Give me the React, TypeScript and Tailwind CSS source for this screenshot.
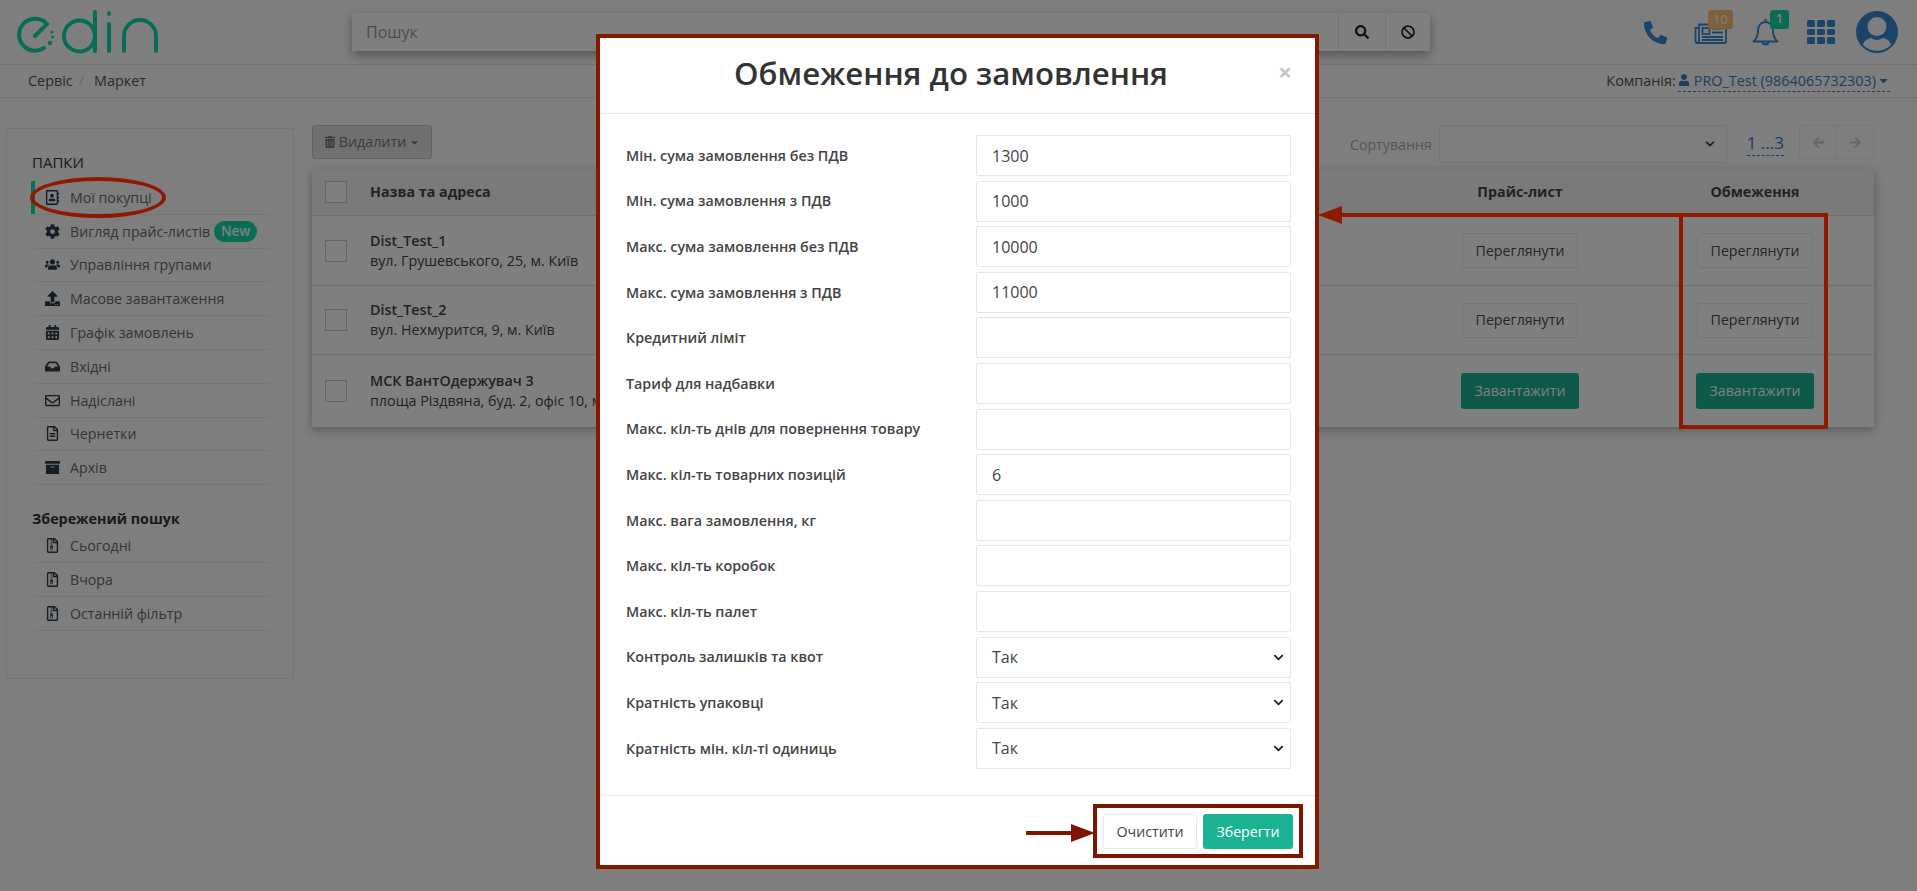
import type { ReactNode } from "react";
import {
  FaArchive,
  FaArrowLeft,
  FaArrowRight,
  FaBan,
  FaCalendarAlt,
  FaCaretDown,
  FaChevronDown,
  FaCog,
  FaInbox,
  FaPhoneAlt,
  FaRegAddressBook,
  FaRegEnvelope,
  FaRegFileAlt,
  FaRegFileArchive,
  FaSearch,
  FaTrashAlt,
  FaUpload,
  FaUser,
  FaUsers,
} from "react-icons/fa";

const FONT = "font-['Open_Sans','Noto_Sans',sans-serif]";

const FOLDERS = [
  { label: "Мої покупці", icon: <FaRegAddressBook /> },
  { label: "Вигляд прайс-листів", icon: <FaCog />, badge: "New" },
  { label: "Управління групами", icon: <FaUsers /> },
  { label: "Масове завантаження", icon: <FaUpload /> },
  { label: "Графік замовлень", icon: <FaCalendarAlt /> },
  { label: "Вхідні", icon: <FaInbox /> },
  { label: "Надіслані", icon: <FaRegEnvelope /> },
  { label: "Чернетки", icon: <FaRegFileAlt /> },
  { label: "Архів", icon: <FaArchive /> },
];

const SAVED = ["Сьогодні", "Вчора", "Останній фільтр"];

const ROWS = [
  { name: "Dist_Test_1", address: "вул. Грушевського, 25, м. Київ", action: "view", h: "h-[70px]" },
  { name: "Dist_Test_2", address: "вул. Нехмурится, 9, м. Київ", action: "view", h: "h-[69px]" },
  { name: "МСК ВантОдержувач 3", address: "площа Різдвяна, буд. 2, офіс 10, м. Київ", action: "load", h: "h-[72px]" },
];

const FIELDS: { label: string; value: string; select?: boolean }[] = [
  { label: "Мін. сума замовлення без ПДВ", value: "1300" },
  { label: "Мін. сума замовлення з ПДВ", value: "1000" },
  { label: "Макс. сума замовлення без ПДВ", value: "10000" },
  { label: "Макс. сума замовлення з ПДВ", value: "11000" },
  { label: "Кредитний ліміт", value: "" },
  { label: "Тариф для надбавки", value: "" },
  { label: "Макс. кіл-ть днів для повернення товару", value: "" },
  { label: "Макс. кіл-ть товарних позицій", value: "6" },
  { label: "Макс. вага замовлення, кг", value: "" },
  { label: "Макс. кіл-ть коробок", value: "" },
  { label: "Макс. кіл-ть палет", value: "" },
  { label: "Контроль залишків та квот", value: "Так", select: true },
  { label: "Кратність упаковці", value: "Так", select: true },
  { label: "Кратність мін. кіл-ті одиниць", value: "Так", select: true },
];

function Logo() {
  return (
    <svg width="160" height="64" viewBox="0 0 160 64" fill="none" stroke="#12d8aa" strokeWidth="4" strokeLinecap="round">
      <path d="M35 36 L47 24 A16 16 0 1 0 44 48" />
      <circle cx="52" cy="32" r="1.6" fill="#12d8aa" stroke="none" />
      <circle cx="52.5" cy="37" r="1.6" fill="#12d8aa" stroke="none" />
      <circle cx="50" cy="43" r="2.2" fill="#12d8aa" stroke="none" />
      <circle cx="79.5" cy="36" r="15.5" />
      <path d="M95 12 V51" />
      <path d="M109 13 V14 M109 24 V51" />
      <path d="M124 51 V36 A16 16 0 0 1 156 36 V51" />
    </svg>
  );
}

function Avatar() {
  return (
    <svg width="42" height="42" viewBox="0 0 42 42">
      <circle cx="21" cy="21" r="21" fill="#3688d0" />
      <circle cx="21" cy="15.5" r="9.5" fill="#fdfdfd" />
      <path d="M7 34 C8 29 13 27.5 15.5 27 C18 29.5 24 29.5 26.5 27 C29 27.5 34 29 35 34 C31 38 26 39.8 21 39.8 C16 39.8 11 38 7 34 Z" fill="#fdfdfd" />
    </svg>
  );
}

function Newspaper() {
  return (
    <svg width="33" height="21" viewBox="0 0 33 21" fill="none" stroke="#3688d0" strokeWidth="1.8">
      <path d="M5 5 H1.5 V18 Q1.5 20 3.5 20 H30 Q32 20 32 18 V1.5 H5 V18 Q5 20 3.5 20" />
      <rect x="8.5" y="5" width="7" height="6" />
      <path d="M18 5.5 H29 M18 9.5 H29 M8 14 H29 M8 17 H29" />
    </svg>
  );
}

function Bell() {
  return (
    <svg width="27" height="29" viewBox="0 0 27 29" fill="none" stroke="#3688d0" strokeWidth="1.9" strokeLinejoin="round">
      <path d="M13.5 1 V4" />
      <path d="M1.5 23.5 C4.5 21 6 17 6 12.5 C6 7.5 9 4 13.5 4 C18 4 21 7.5 21 12.5 C21 17 22.5 21 25.5 23.5 Z" />
      <path d="M10.5 23.5 A3 3 0 0 0 16.5 23.5" />
    </svg>
  );
}

function AppsGrid() {
  return (
    <div className="grid w-[28px] grid-cols-3 gap-[2px]">
      {Array.from({ length: 9 }).map((_, i) => (
        <span key={i} className="h-[6.5px] rounded-[1.5px] bg-[#3688d0]" />
      ))}
    </div>
  );
}

function Checkbox() {
  return <span className="block h-[22px] w-[22px] border border-[#c9c9c9] bg-white" />;
}

function NavItem({ icon, children, active }: { icon: ReactNode; children: ReactNode; active?: boolean }) {
  return (
    <div className="relative flex h-[33.8px] items-center border-b border-[#e7eaec] pl-[10px] text-[14.2px] text-[#676a6c]">
      {active && <span className="absolute bottom-0 left-[-4px] top-0 w-[4px] bg-[#12d8aa]" />}
      <span className="flex w-[25px] justify-start text-[15px] text-[#2b3a4a]">{icon}</span>
      {children}
    </div>
  );
}

function ViewButton() {
  return (
    <button className="h-[35px] w-[116px] rounded-[3px] border border-[#e7eaec] bg-white text-[14.2px] text-[#4a4a4a]">
      Переглянути
    </button>
  );
}

function LoadButton() {
  return (
    <button className="h-[36px] w-[118px] rounded-[3px] bg-[#1ab394] text-[14.2px] text-white">
      Завантажити
    </button>
  );
}

function Page() {
  return (
    <div className="h-[891px] overflow-hidden bg-[#fdfdfd]">
      <header className="flex h-[65px] items-center border-b border-[#e4e4e4] pr-[19px]">
        <Logo />
        <div className="ml-[192px] flex h-[38px] w-[1078px] items-stretch bg-white shadow-[0_4px_10px_rgba(0,0,0,0.35)]">
          <div className="flex flex-1 items-center pl-[14px] text-[16px] text-[#999]">Пошук</div>
          <span className="flex w-[47px] items-center justify-center border-l border-[#e7e7e7] text-[14px] text-[#222]"><FaSearch /></span>
          <span className="flex w-[45px] items-center justify-center border-l border-[#e7e7e7] text-[14px] text-[#222]"><FaBan /></span>
        </div>
        <div className="ml-auto flex items-center">
          <FaPhoneAlt className="text-[23px] text-[#3688d0]" />
          <div className="relative ml-[27px] mt-[3px]">
            <Newspaper />
            <span className="absolute left-[14px] top-[-13px] flex h-[19px] w-[25px] items-center justify-center rounded-[3px] bg-[#ffc070] text-[13px] text-white">10</span>
          </div>
          <div className="relative ml-[25px]">
            <Bell />
            <span className="absolute left-[18px] top-[-8px] flex h-[19px] w-[19px] items-center justify-center rounded-[3px] bg-[#12d8aa] text-[13px] font-semibold text-white">1</span>
          </div>
          <div className="ml-[28px]"><AppsGrid /></div>
          <div className="ml-[21px]"><Avatar /></div>
        </div>
      </header>

      <div className="flex h-[33px] items-center justify-between border-b border-[#e4e4e4] pl-[28px] pr-[27px] text-[14.4px] text-[#555]">
        <div className="flex items-center">
          <span>Сервіс</span>
          <span className="ml-[6px] mr-[10px] text-[#ccc]">/</span>
          <span>Маркет</span>
        </div>
        <div className="flex items-center">
          <span>Компанія:</span>
          <span className="ml-[2px] flex items-center gap-[4px] border-b border-dashed border-[#3a7ec0] text-[#3a7ec0]">
            <FaUser className="text-[12px]" />
            PRO_Test (9864065732303)
            <FaCaretDown className="ml-[-3px] text-[13px]" />
          </span>
        </div>
      </div>

      <div className="flex items-start pl-[6px] pr-[43px] pt-[28px]">
        <aside className="mt-[2px] h-[551px] w-[288px] shrink-0 border border-[#e7eaec] pl-[25px] pr-[24px] pt-[23px]">
          <div className="text-[15px] font-medium leading-[20px] text-[#333]">ПАПКИ</div>
          <div className="ml-[3px] mt-[9px]">
            {FOLDERS.map((f, i) => (
              <NavItem key={f.label} icon={f.icon} active={i === 0}>
                {f.label}
                {f.badge && (
                  <span className="ml-[4px] flex h-[21px] w-[43px] items-center justify-center rounded-full bg-[#12d8aa] text-[13.5px] font-semibold text-white">{f.badge}</span>
                )}
              </NavItem>
            ))}
          </div>
          <div className="mt-[24px] text-[14.3px] font-bold leading-[20px] text-[#333]">Збережений пошук</div>
          <div className="ml-[3px]">
            {SAVED.map((s) => (
              <NavItem key={s} icon={<FaRegFileArchive />}>{s}</NavItem>
            ))}
          </div>
        </aside>

        <main className="ml-[18px] mt-[-1px] flex-1">
          <div className="flex h-[41px] items-start">
            <button className="flex h-[34px] w-[120px] items-center justify-center gap-[3px] rounded-[3px] border border-[#c4c4c4] bg-[#e0e0e0] text-[14.3px] text-[#777]">
              <FaTrashAlt className="text-[12px]" />
              Видалити
              <FaCaretDown className="text-[11px]" />
            </button>
            <div className="ml-auto flex items-start">
              <span className="mt-[9px] text-[14.2px] text-[#aaa]">Сортування</span>
              <span className="ml-[7px] flex h-[38px] w-[288px] items-center justify-end rounded-[2px] border border-[#e5e6e7] pr-[11px] text-[10px] text-[#333]"><FaChevronDown /></span>
              <span className="ml-[20px] mt-[7px] h-[24px] border-b border-dashed border-[#3a7ec0] text-[17px] leading-[22px] text-[#3a7ec0]">1 ...3</span>
              <div className="ml-[15px] flex h-[34px] w-[75px] rounded-[3px] border border-[#eee] text-[13px] text-[#ccc]">
                <span className="flex flex-1 items-center justify-center border-r border-[#eee]"><FaArrowLeft /></span>
                <span className="flex flex-1 items-center justify-center"><FaArrowRight /></span>
              </div>
            </div>
          </div>

          <div className="mt-[3px] bg-white shadow-[0_3px_10px_rgba(0,0,0,0.3)]">
            <div className="flex h-[47px] items-center border-b border-[#ddd] bg-[#f5f5f5] text-[14.3px] font-bold text-[#444]">
              <span className="ml-[13px]"><Checkbox /></span>
              <span className="ml-[23px]">Назва та адреса</span>
              <span className="ml-auto w-[116px] text-center">Прайс-лист</span>
              <span className="ml-[119px] mr-[61px] w-[116px] text-center">Обмеження</span>
            </div>
            {ROWS.map((r, i) => (
              <div key={r.name} className={`flex ${r.h} items-center ${i < 2 ? "border-b border-[#ddd]" : ""}`}>
                <span className="ml-[13px]"><Checkbox /></span>
                <div className="ml-[23px] text-[14.3px] leading-[20px] text-[#444]">
                  <div className="font-semibold">{r.name}</div>
                  <div>{r.address}</div>
                </div>
                <div className="ml-auto flex w-[118px] justify-center">{r.action === "view" ? <ViewButton /> : <LoadButton />}</div>
                <div className="ml-[117px] mr-[60px] flex w-[118px] justify-center">{r.action === "view" ? <ViewButton /> : <LoadButton />}</div>
              </div>
            ))}
          </div>
        </main>
      </div>
    </div>
  );
}

function Field({ label, value, select }: { label: string; value: string; select?: boolean }) {
  return (
    <div className="flex items-center">
      <span className="w-[350px] text-[14.3px] font-semibold text-[#444]">{label}</span>
      <div className="flex h-[41px] w-[315px] items-center justify-between rounded-[2px] border border-[#e5e6e7] pl-[15px] pr-[5px] text-[16px] text-[#444]">
        <span>{value}</span>
        {select && <FaChevronDown className="mr-[1px] text-[11px] text-[#222]" />}
      </div>
    </div>
  );
}

function Modal() {
  return (
    <div className="absolute inset-0 flex justify-center bg-black/50 pr-[2px] pt-[34px]">
      <div className="relative h-[835px] w-[723px] border-[4px] border-[#861800] bg-white">
        <div className="relative flex h-[76px] items-center justify-center border-b border-[#e7e7e7] pb-[4px] pr-[13px]">
          <h1 className="text-[31.2px] font-semibold leading-none text-[#333]">Обмеження до замовлення</h1>
          <span className="absolute right-[23px] top-[22px] text-[24px] font-bold leading-none text-[#c4c4c4]">×</span>
        </div>
        <div className="flex h-[681px] flex-col gap-[4.6px] pl-[26px] pt-[21px]">
          {FIELDS.map((f) => (
            <Field key={f.label} {...f} />
          ))}
        </div>
        <div className="flex h-[70px] items-start justify-end gap-[6px] border-t border-[#e7e7e7] pr-[22px] pt-[18px] text-[14.2px]">
          <button className="h-[35px] w-[94px] rounded-[3px] border border-[#e7eaec] bg-white text-[#444]">Очистити</button>
          <button className="h-[35px] w-[90px] rounded-[3px] bg-[#1ab394] text-white">Зберегти</button>
        </div>
      </div>
    </div>
  );
}

// Red callouts drawn on top of the screenshot: they sit at fixed spots by nature.
function Callouts() {
  return (
    <>
      <span className="absolute left-[30px] top-[177px] h-[41px] w-[136px] rounded-[50%] border-[4px] border-[#8f1800]" />
      <span className="absolute left-[1679px] top-[213px] h-[216px] w-[149px] border-[4px] border-[#8f1800]" />
      <span className="absolute left-[1340px] top-[213px] h-[4px] w-[340px] bg-[#8f1800]" />
      <svg className="absolute left-[1318px] top-[206px]" width="24" height="18" viewBox="0 0 24 18">
        <path d="M0 9 L24 0 V18 Z" fill="#8f1800" />
      </svg>
      <span className="absolute left-[1093px] top-[804px] h-[54px] w-[210px] border-[4px] border-[#7d1600]" />
      <span className="absolute left-[1026px] top-[831px] h-[4px] w-[46px] bg-[#7d1600]" />
      <svg className="absolute left-[1071px] top-[824px]" width="24" height="18" viewBox="0 0 24 18">
        <path d="M24 9 L0 0 V18 Z" fill="#7d1600" />
      </svg>
    </>
  );
}

export default function App() {
  return (
    <div className={`relative h-[891px] overflow-hidden ${FONT}`}>
      <Page />
      <Modal />
      <Callouts />
    </div>
  );
}
